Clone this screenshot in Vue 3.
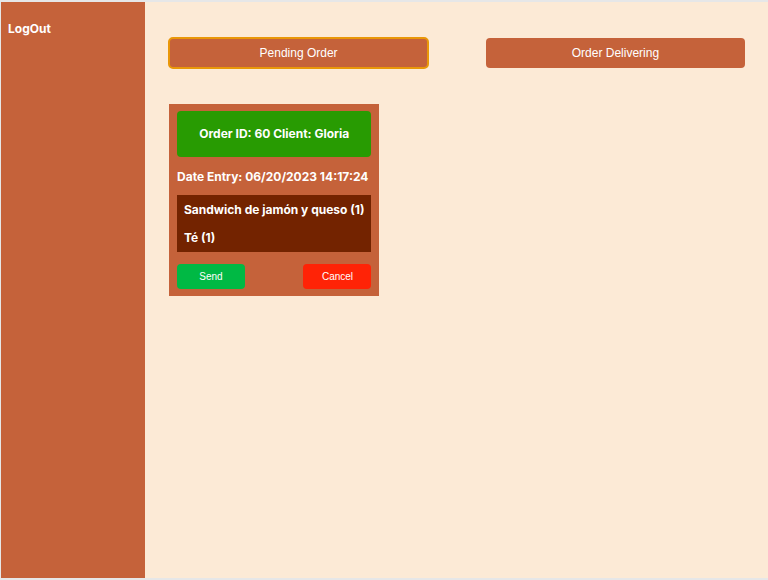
<script setup>
import { ref } from 'vue'

const tabs = ['Pending Order', 'Order Delivering']
const active = ref('Pending Order')

const orders = [
  {
    id: 60,
    client: 'Gloria',
    date: '06/20/2023 14:17:24',
    items: [
      { name: 'Sandwich de jamón y queso', qty: 1 },
      { name: 'Té', qty: 1 }
    ]
  }
]
</script>

<template>
  <div class="page">
    <aside class="sidebar">
      <a href="#" class="logout">LogOut</a>
    </aside>
    <main class="content">
      <nav class="tabs">
        <button
          v-for="tab in tabs"
          :key="tab"
          type="button"
          class="tab"
          :class="{ active: tab === active }"
          @click="active = tab"
        >{{ tab }}</button>
      </nav>
      <section class="orders">
        <article v-for="order in orders" :key="order.id" class="card">
          <h2 class="card-title">Order ID: {{ order.id }} Client: {{ order.client }}</h2>
          <p class="date">Date Entry: {{ order.date }}</p>
          <ul class="items">
            <li v-for="item in order.items" :key="item.name">{{ item.name }} ({{ item.qty }})</li>
          </ul>
          <div class="actions">
            <button type="button" class="action send">Send</button>
            <button type="button" class="action cancel">Cancel</button>
          </div>
        </article>
      </section>
    </main>
  </div>
</template>

<style>
body {
  background: #e6e7e8;
}
</style>

<style scoped>
.page {
  box-sizing: border-box;
  display: flex;
  min-height: 100vh;
  padding: 2px 0 2px 1px;
  font-family: Inter, "Liberation Sans", sans-serif;
  font-size: 12px;
  font-weight: 700;
  line-height: 16px;
  color: #fff;
}

.sidebar {
  box-sizing: border-box;
  flex: 0 0 144px;
  padding: 19px 7px;
  background: #c5623a;
}

.logout {
  color: inherit;
  text-decoration: none;
}

.content {
  flex: 1;
  padding: 36px 23px 36px 24px;
  background: #fcead6;
}

.tabs {
  display: flex;
  justify-content: space-between;
}

.tab {
  box-sizing: border-box;
  width: 45%;
  height: 30px;
  padding: 0;
  border: 0;
  border-radius: 4px;
  background: #c5623a;
  color: #fff;
  font: 12px "Liberation Sans", Arial, sans-serif;
}

.tab.active {
  outline: 2px solid #e99709;
  outline-offset: -1px;
}

.orders {
  display: flex;
  flex-wrap: wrap;
  gap: 24px;
  margin-top: 36px;
}

.card {
  padding: 7px 8px;
  background: #c5623a;
}

.card-title {
  margin: 0;
  padding: 15px 7px;
  border-radius: 4px;
  background: #289b02;
  font-size: 12px;
  text-align: center;
}

.date {
  margin: 12px 0 10px;
}

.items {
  display: grid;
  gap: 12px;
  margin: 0;
  padding: 7px 7px 6px;
  background: #732300;
  list-style: none;
}

.actions {
  display: flex;
  justify-content: space-between;
  margin-top: 12px;
}

.action {
  width: 68px;
  height: 25px;
  padding: 0;
  border: 0;
  border-radius: 4px;
  color: #fff;
  font: 10px "Liberation Sans", Arial, sans-serif;
}

.send {
  background: #00b944;
}

.cancel {
  background: #ff2306;
}
</style>
